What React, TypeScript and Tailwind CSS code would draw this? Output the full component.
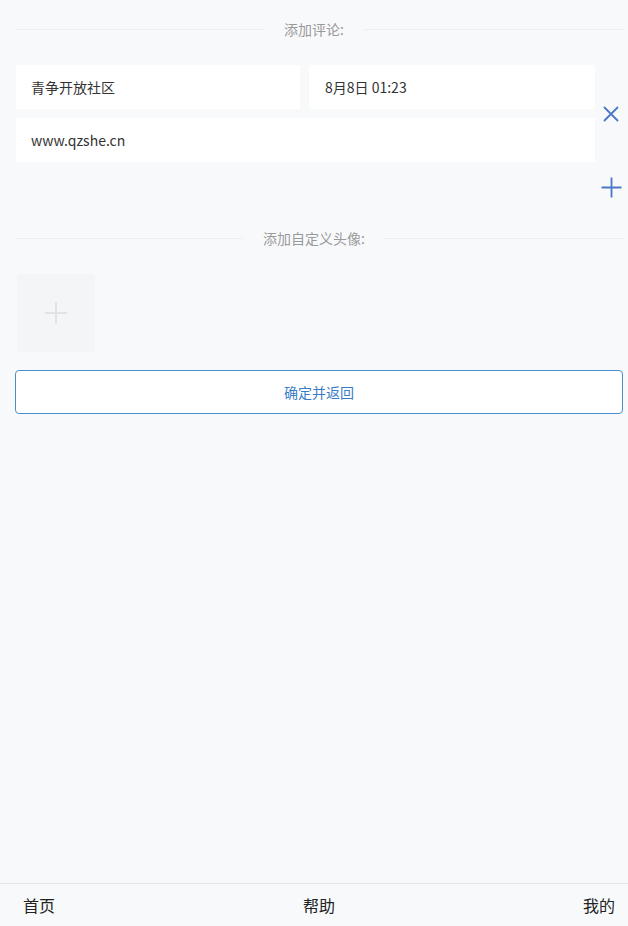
import React from "react";

const font = { fontFamily: '"Microsoft YaHei", "Noto Sans CJK SC", "Noto Sans", sans-serif' };

function Divider({ label }: { label: string }) {
  return (
    <div className="flex items-center h-[20px] pl-[15px] pr-[4px]">
      <div className="flex-1 h-px bg-[#eceef2]" />
      <span className="px-[20px] text-[14px] text-[#9a9a9a] leading-[20px]">{label}</span>
      <div className="flex-1 h-px bg-[#eceef2]" />
      <div className="w-[11px] h-px bg-[#eceef2]" />
    </div>
  );
}

export default function App() {
  return (
    <div className="h-[926px] flex flex-col bg-[#f8f9fb] text-[#333]" style={font}>
      <div className="flex-1 flex flex-col">
        <div className="mt-[19px]">
          <Divider label="添加评论:" />
        </div>
        <div className="flex mt-[26px]">
          <div className="ml-[16px] w-[579px] flex flex-col gap-[9px]">
            <div className="flex gap-[9px]">
              <div className="w-[284px] h-[44px] bg-white flex items-center px-[15px] text-[14px] text-[#333]">青争开放社区</div>
              <div className="flex-1 h-[44px] bg-white flex items-center px-[16px] text-[14px] text-[#333]">8月8日 01:23</div>
            </div>
            <div className="h-[44px] bg-white flex items-center px-[15px] text-[14px] text-[#333]">www.qzshe.cn</div>
          </div>
          <div className="flex-1 flex flex-col items-center pt-[41px]">
            <svg width="16" height="16" viewBox="0 0 16 16" className="ml-[-1px]">
              <path d="M1.5 1.5 L14.5 14.5 M14.5 1.5 L1.5 14.5" stroke="#4a78c8" strokeWidth="1.8" strokeLinecap="round" />
            </svg>
            <svg width="21" height="21" viewBox="0 0 21 21" className="mt-[55px] ml-[-1px]">
              <path d="M10.5 0.5 V20.5 M0.5 10.5 H20.5" stroke="#4a78c8" strokeWidth="1.8" />
            </svg>
          </div>
        </div>
        <div className="mt-[30px]">
          <Divider label="添加自定义头像:" />
        </div>
        <div className="mt-[26px] ml-[17px] w-[78px] h-[78px] bg-[#f4f5f7] flex items-center justify-center">
          <svg width="22" height="22" viewBox="0 0 22 22">
            <path d="M11 0 V22 M0 11 H22" stroke="#dcdde0" strokeWidth="1.5" />
          </svg>
        </div>
        <button className="mt-[18px] ml-[15px] mr-[5px] h-[44px] bg-white border border-[#4a8fcc] rounded-[4px] text-[14px] text-[#3a7cc8] flex items-center justify-center" style={font}>
          确定并返回
        </button>
      </div>
      <div className="h-[43px] border-t border-[#e3e4e6] bg-[#f8f9fb] flex items-center justify-between pl-[23px] pr-[13px] text-[16px] text-[#222]">
        <span>首页</span>
        <span>帮助</span>
        <span>我的</span>
      </div>
    </div>
  );
}
